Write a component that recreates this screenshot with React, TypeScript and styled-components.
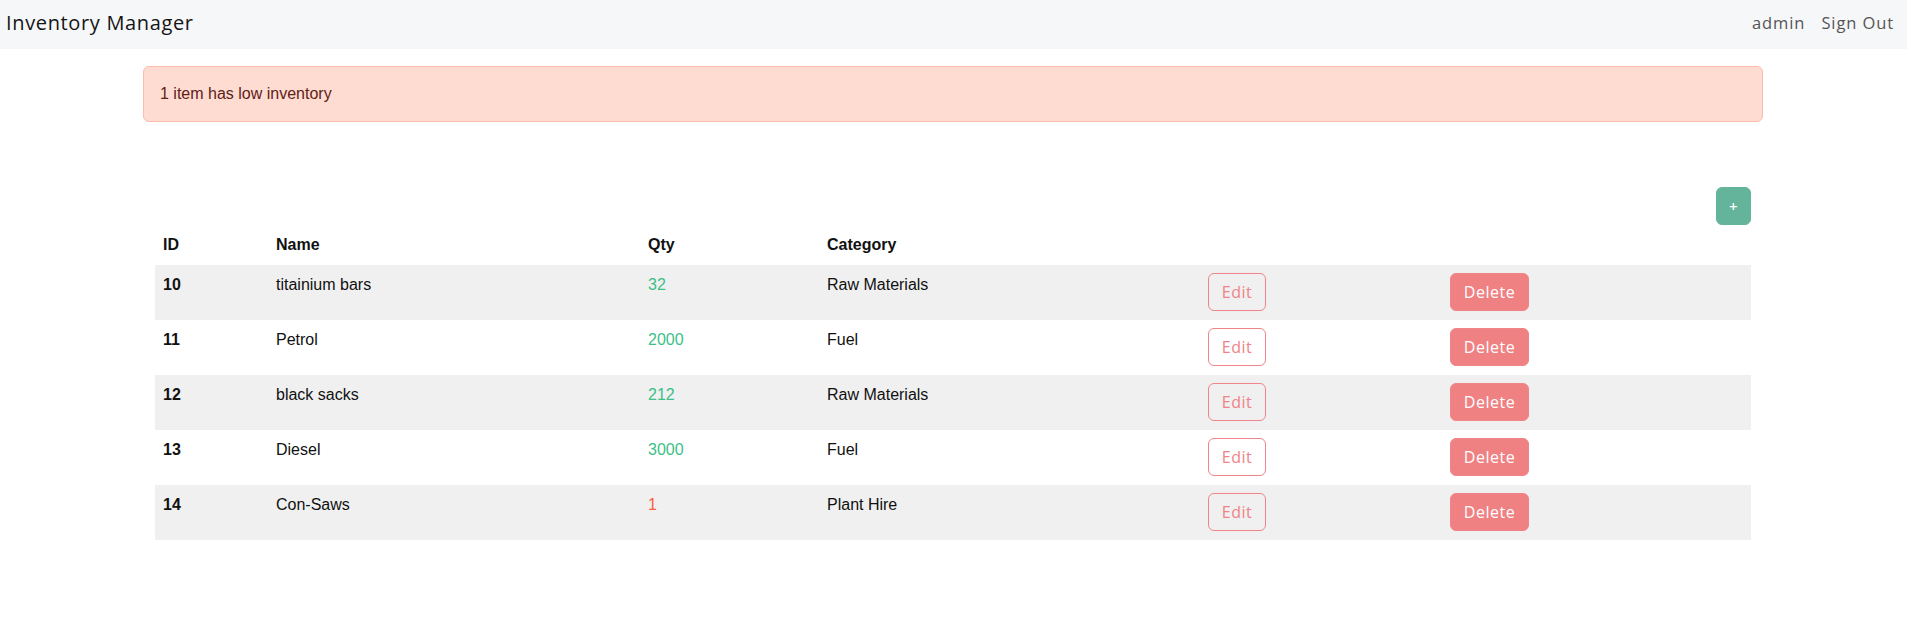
import React from "react";
import styled, { createGlobalStyle } from "styled-components";

const GlobalStyle = createGlobalStyle`
  * { box-sizing: border-box; }
  body {
    margin: 0;
    background: #ffffff;
    font-family: "Liberation Sans", Arial, sans-serif;
    color: #111;
  }
`;

const headingFont = `"Open Sans", "Noto Sans", sans-serif`;

const Navbar = styled.header`
  display: flex;
  align-items: center;
  justify-content: space-between;
  height: 49px;
  padding: 0 5px 0 6px;
  background: #f6f7f9;
`;

const Brand = styled.div`
  font-family: ${headingFont};
  font-size: 20px;
  line-height: 30px;
  letter-spacing: 0.65px;
  color: #151515;
  margin-top: -4px;
`;

const NavLinks = styled.nav`
  display: flex;
  align-items: center;
  margin-top: -4px;
`;

const NavLink = styled.a`
  font-family: ${headingFont};
  font-size: 16.5px;
  line-height: 24px;
  letter-spacing: 0.9px;
  color: #555;
  padding: 0 8px;
  text-decoration: none;
  cursor: pointer;
`;

const Main = styled.main`
  padding: 17px 144px 0 143px;
`;

const Alert = styled.div`
  background: #fedcd2;
  border: 1px solid #fdbba9;
  border-radius: 6px;
  padding: 15px 16px;
  font-size: 16px;
  line-height: 24px;
  color: #5f2118;
`;

const Section = styled.section`
  margin: 65px 12px 0;
`;

const Toolbar = styled.div`
  display: flex;
  justify-content: flex-end;
`;

const Button = styled.button<{ $variant: "add" | "outline" | "solid"; $w: number }>`
  font-family: ${headingFont};
  font-size: ${(p) => (p.$variant === "add" ? "15px" : "16px")};
  font-weight: ${(p) => (p.$variant === "add" ? 600 : 400)};
  letter-spacing: 0.5px;
  line-height: 24px;
  height: 38px;
  width: ${(p) => p.$w}px;
  padding: 0;
  border-radius: 6px;
  cursor: pointer;
  border: 1px solid
    ${(p) => (p.$variant === "add" ? "#63b49a" : "#f08488")};
  background: ${(p) =>
    p.$variant === "add" ? "#63b49a" : p.$variant === "solid" ? "#f08183" : "transparent"};
  color: ${(p) => (p.$variant === "outline" ? "#ef8387" : "#ffffff")};
`;

const Table = styled.table`
  width: 100%;
  border-collapse: collapse;
  table-layout: fixed;
  font-size: 16px;
  line-height: 24px;
`;

const Th = styled.th`
  text-align: left;
  font-weight: 700;
  padding: 8px;
  color: #111;
`;

const Row = styled.tr<{ $striped: boolean }>`
  background: ${(p) => (p.$striped ? "#f0f0f0" : "#ffffff")};
`;

const Td = styled.td<{ $bold?: boolean; $color?: string }>`
  padding: 8px 8px 9px;
  vertical-align: top;
  font-weight: ${(p) => (p.$bold ? 700 : 400)};
  color: ${(p) => p.$color || "#111"};
`;

type Item = { id: number; name: string; qty: number; category: string };

const items: Item[] = [
  { id: 10, name: "titainium bars", qty: 32, category: "Raw Materials" },
  { id: 11, name: "Petrol", qty: 2000, category: "Fuel" },
  { id: 12, name: "black sacks", qty: 212, category: "Raw Materials" },
  { id: 13, name: "Diesel", qty: 3000, category: "Fuel" },
  { id: 14, name: "Con-Saws", qty: 1, category: "Plant Hire" },
];

const colWidths = [113, 372, 179, 381, 242, 309];

export default function App() {
  return (
    <>
      <GlobalStyle />
      <Navbar>
        <Brand>Inventory Manager</Brand>
        <NavLinks>
          <NavLink>admin</NavLink>
          <NavLink>Sign Out</NavLink>
        </NavLinks>
      </Navbar>
      <Main>
        <Alert>1 item has low inventory</Alert>
        <Section>
          <Toolbar>
            <Button $variant="add" $w={35}>+</Button>
          </Toolbar>
          <Table>
            <colgroup>
              {colWidths.map((w, i) => (
                <col key={i} style={{ width: w }} />
              ))}
            </colgroup>
            <thead>
              <tr>
                <Th>ID</Th>
                <Th>Name</Th>
                <Th>Qty</Th>
                <Th>Category</Th>
                <Th />
                <Th />
              </tr>
            </thead>
            <tbody>
              {items.map((it, i) => (
                <Row key={it.id} $striped={i % 2 === 0}>
                  <Td $bold>{it.id}</Td>
                  <Td>{it.name}</Td>
                  <Td $color={it.qty < 10 ? "#ff5c3c" : "#3dbf88"}>{it.qty}</Td>
                  <Td>{it.category}</Td>
                  <Td>
                    <Button $variant="outline" $w={58}>Edit</Button>
                  </Td>
                  <Td>
                    <Button $variant="solid" $w={79}>Delete</Button>
                  </Td>
                </Row>
              ))}
            </tbody>
          </Table>
        </Section>
      </Main>
    </>
  );
}
